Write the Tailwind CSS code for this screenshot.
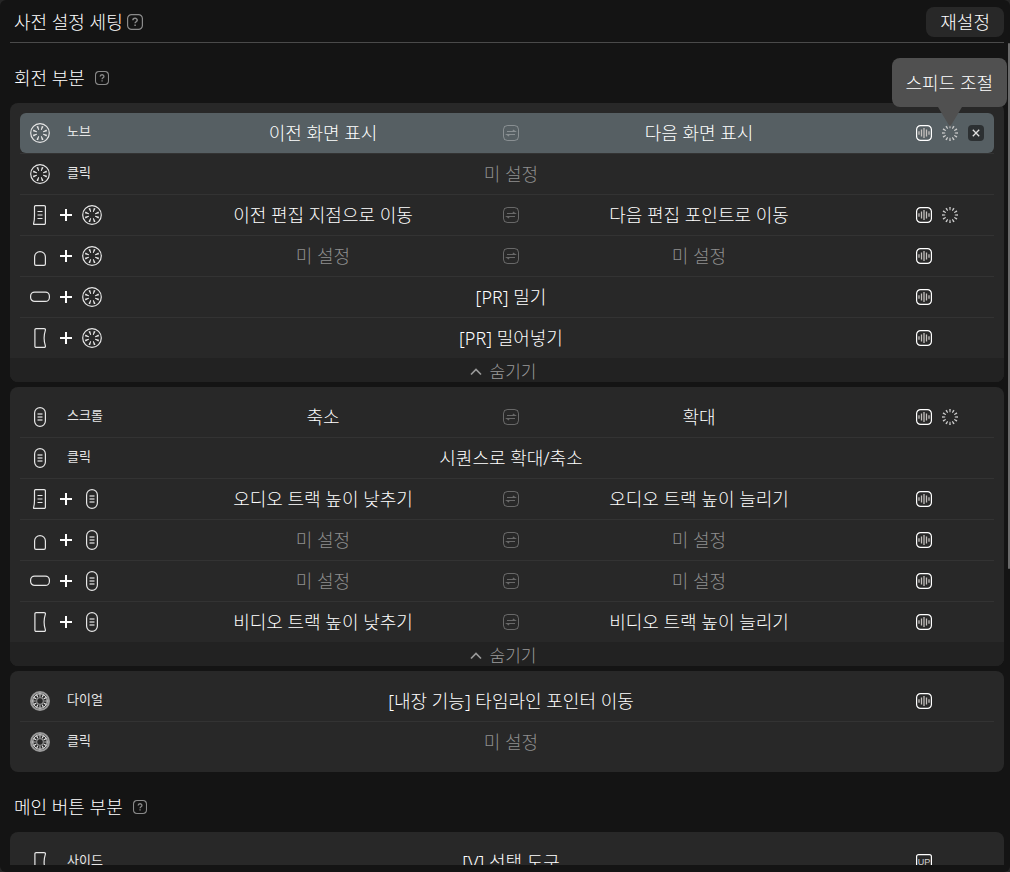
<!DOCTYPE html>
<html lang="ko">
<head>
    <meta charset="UTF-8">
    <meta name="viewport" content="width=device-width, initial-scale=1.0">
    <title>사전 설정 세팅</title>
    <script src="https://cdn.jsdelivr.net/npm/@tailwindcss/browser@4"></script>
</head>
<body class="bg-[#262626] font-['Noto_Sans','Noto_Sans_CJK_KR',sans-serif] text-lg leading-6 font-light text-white">

    <!-- Icon sprite -->
    <svg class="hidden">
        <symbol id="knob" viewBox="0 0 20 20">
            <circle cx="10" cy="10" r="9.3" fill="none" stroke="currentColor" stroke-width="1.2"/>
            <circle cx="10" cy="10" r="5.3" fill="none" stroke="currentColor" stroke-width="4" pathLength="32" stroke-dasharray="1.3 2.7" stroke-dashoffset="-1.35"/>
        </symbol>
        <symbol id="dial" viewBox="0 0 20 20">
            <g fill="none" stroke="currentColor">
                <circle cx="10" cy="10" r="9" stroke-width="2" stroke-opacity=".6"/>
                <circle cx="10" cy="10" r="7.3" stroke-width="1"/>
                <circle cx="10" cy="10" r="5.4" stroke-width="2.8" pathLength="36" stroke-dasharray="1.1 1.9" stroke-dashoffset="0.55"/>
                <circle cx="10" cy="10" r="3.4" stroke-width=".9" stroke-opacity=".7"/>
            </g>
        </symbol>
        <symbol id="scroll" viewBox="0 0 20 20">
            <rect x="4.6" y=".6" width="10.8" height="18.8" rx="5.4" fill="none" stroke="currentColor" stroke-width="1.2"/>
            <path d="M7.5 7h5M7.5 10h5M7.5 13h5" stroke="currentColor" stroke-width="1.6" stroke-opacity=".8"/>
        </symbol>
        <symbol id="tall" viewBox="0 0 20 20">
            <g fill="none" stroke="currentColor" stroke-width="1.2">
                <path d="M5.6.6h8.6a1.2 1.2 0 0 1 1.2 1.2v16.4a1.2 1.2 0 0 1-1.2 1.2H4.1c-.5 0-.7-.4-.5-.8.8-2.4.9-5 .9-7.6V1.8A1.2 1.2 0 0 1 5.6.6z"/>
                <path d="M7.5 6.5h5M7.5 10h5M7.5 13.5h5"/>
            </g>
        </symbol>
        <symbol id="top" viewBox="0 0 20 20">
            <path d="M4.6 18V11a5.4 5.4 0 0 1 10.8 0v7a1.4 1.4 0 0 1-1.4 1.4H6A1.4 1.4 0 0 1 4.6 18z" fill="none" stroke="currentColor" stroke-width="1.2"/>
        </symbol>
        <symbol id="short" viewBox="0 0 20 20">
            <rect x=".6" y="5.1" width="18.8" height="9.3" rx="4" fill="none" stroke="currentColor" stroke-width="1.2"/>
        </symbol>
        <symbol id="side" viewBox="0 0 20 20">
            <path d="M6.1.6h8c.9 0 1.5.6 1.3 1.5-1.7 5.2-1.7 10.6 0 15.8.2.9-.4 1.5-1.3 1.5h-8a1.2 1.2 0 0 1-1.2-1.2V1.8A1.2 1.2 0 0 1 6.1.6z" fill="none" stroke="currentColor" stroke-width="1.2"/>
        </symbol>
        <symbol id="plus" viewBox="0 0 12 12">
            <path d="M6 0v12M0 6h12" stroke="#fff" stroke-width="2"/>
        </symbol>
        <symbol id="swap" viewBox="0 0 16 16">
            <rect x=".5" y=".5" width="15" height="15" rx="4" fill="none" stroke="currentColor"/>
            <path d="M4 6.5h8L9.8 5M12 9.5H4L6.2 11" fill="none" stroke="currentColor" stroke-width="1.2"/>
        </symbol>
        <symbol id="haptic" viewBox="0 0 16 16">
            <rect x=".6" y=".6" width="14.8" height="14.8" rx="4" fill="none" stroke="#fff" stroke-width="1.2"/>
            <path d="M3 6.3v3.4M5.5 4.500v7M8 3v10M10.500 4.500v7M13 6.300v3.400" stroke="#c4c0bd" stroke-width="1.300"/>
        </symbol>
        <symbol id="speed" viewBox="0 0 16 16">
            <circle cx="8" cy="8" r="6.400" fill="none" stroke="#c8c8c8" stroke-width="3.200" pathLength="36" stroke-dasharray="1.200 1.800" stroke-dashoffset=".6"/>
        </symbol>
        <symbol id="close" viewBox="0 0 16 16">
            <rect width="16" height="16" rx="4" fill="#2c3032"/>
            <path d="M4.800 4.800l6.400 6.400M11.200 4.800l-6.400 6.400" stroke="#e0e0e0" stroke-width="1.300"/>
        </symbol>
        <symbol id="up" viewBox="0 0 16 16">
            <rect x=".6" y=".6" width="14.800" height="14.800" rx="2" fill="none" stroke="#fff" stroke-width="1.200"/>
            <text x="8" y="11" text-anchor="middle" font-family="Liberation Sans" font-size="9" font-weight="400" fill="#d0d0d0">UP</text>
        </symbol>
        <symbol id="help" viewBox="0 0 16 16">
            <rect x=".6" y=".6" width="14.800" height="14.800" rx="4" fill="none" stroke="currentColor" stroke-width="1.200"/>
            <path d="M5.900 6.300c0-2.700 4.300-2.700 4.300-.1 0 1.500-2.100 1.600-2.100 3.100M8.100 10.600v1.500" fill="none" stroke="currentColor" stroke-width="1.500"/>
        </symbol>
    </svg>

    <div class="flex h-screen flex-col overflow-hidden rounded-md bg-[#141414] pb-[7px]">
        <header class="mr-1.5 ml-2.5 flex h-[43px] shrink-0 items-center justify-between border-b border-[#4a4a4a] pt-0.5 pl-1">
            <div class="flex items-center gap-1">
                <h1>사전 설정 세팅</h1>
                <button aria-label="도움말" class="text-[#8a8a8a]"><svg class="size-4"><use href="#help"/></svg></button>
            </div>
            <button class="h-[30px] rounded-lg bg-[#282828] px-3.5">재설정</button>
        </header>

        <div class="flex min-h-0 flex-1">
            <main class="min-w-0 flex-1 overflow-hidden pr-1 pl-2.5">
                <div class="flex h-[60px] items-center gap-2.5 pt-2.5 pl-1">
                    <h2>회전 부분</h2>
                    <button aria-label="도움말" class="text-[#8a8a8a]"><svg class="size-3.5"><use href="#help"/></svg></button>
                </div>
                <section class="rounded-lg bg-[#282828] pt-2.5">
                    <ul id="knob-list" class="divide-y divide-[#333] px-2.5"></ul>
                    <button class="flex h-6 w-full items-center justify-center gap-2 rounded-b-lg bg-[#222] pt-1 pr-2 text-[17px] text-[#9a9a9a]">
                        <svg class="h-2 w-3" viewBox="0 0 12 8" fill="none" stroke="currentColor" stroke-width="1.7"><path d="M1 6.5l5-5 5 5"/></svg>
                        숨기기
                    </button>
                </section>
                <section class="mt-[5px] rounded-lg bg-[#282828] pt-2.5">
                    <ul id="scroll-list" class="divide-y divide-[#333] px-2.5"></ul>
                    <button class="flex h-6 w-full items-center justify-center gap-2 rounded-b-lg bg-[#222] pt-1 pr-2 text-[17px] text-[#9a9a9a]">
                        <svg class="h-2 w-3" viewBox="0 0 12 8" fill="none" stroke="currentColor" stroke-width="1.7"><path d="M1 6.5l5-5 5 5"/></svg>
                        숨기기
                    </button>
                </section>
                <section class="mt-[5px] rounded-lg bg-[#282828] py-2.5">
                    <ul id="dial-list" class="divide-y divide-[#333] px-2.5"></ul>
                </section>

                <div class="flex h-[60px] items-center gap-2.5 pt-2.5 pl-1">
                    <h2>메인 버튼 부분</h2>
                    <button aria-label="도움말" class="text-[#8a8a8a]"><svg class="size-3.5"><use href="#help"/></svg></button>
                </div>
                <section class="rounded-lg bg-[#282828] pt-2.5">
                    <ul id="main-list" class="divide-y divide-[#333] px-2.5"></ul>
                </section>
            </main>
            <!-- Scrollbar -->
            <div class="w-0.5 shrink-0"><div class="h-[64%] rounded-full bg-[#6a6a6a]"></div></div>
        </div>
    </div>

    <script>
        const UNSET = "미 설정";

        // keys: icons on the left, actions: one (merged) or two (left/right turn)
        const lists = {
            "knob-list": [
                { keys: ["knob"], label: "노브", actions: ["이전 화면 표시", "다음 화면 표시"], tools: ["haptic", "speed", "close"], active: true },
                { keys: ["knob"], label: "클릭", actions: [UNSET], tools: [] },
                { keys: ["tall", "knob"], actions: ["이전 편집 지점으로 이동", "다음 편집 포인트로 이동"], tools: ["haptic", "speed"] },
                { keys: ["top", "knob"], actions: [UNSET, UNSET], tools: ["haptic"] },
                { keys: ["short", "knob"], actions: ["[PR] 밀기"], tools: ["haptic"] },
                { keys: ["side", "knob"], actions: ["[PR] 밀어넣기"], tools: ["haptic"] },
            ],
            "scroll-list": [
                { keys: ["scroll"], label: "스크롤", actions: ["축소", "확대"], tools: ["haptic", "speed"] },
                { keys: ["scroll"], label: "클릭", actions: ["시퀀스로 확대/축소"], tools: [] },
                { keys: ["tall", "scroll"], actions: ["오디오 트랙 높이 낮추기", "오디오 트랙 높이 늘리기"], tools: ["haptic"] },
                { keys: ["top", "scroll"], actions: [UNSET, UNSET], tools: ["haptic"] },
                { keys: ["short", "scroll"], actions: [UNSET, UNSET], tools: ["haptic"] },
                { keys: ["side", "scroll"], actions: ["비디오 트랙 높이 낮추기", "비디오 트랙 높이 늘리기"], tools: ["haptic"] },
            ],
            "dial-list": [
                { keys: ["dial"], label: "다이얼", actions: ["[내장 기능] 타임라인 포인터 이동"], tools: ["haptic"] },
                { keys: ["dial"], label: "클릭", actions: [UNSET], tools: [] },
            ],
            "main-list": [
                { keys: ["side"], label: "사이드", actions: ["[V] 선택 도구"], tools: ["up"] },
            ],
        };

        const toolNames = { haptic: "진동", speed: "스피드 조절", close: "삭제", up: "UP" };

        const tooltip = `
            <span role="tooltip" class="absolute -right-[49px] bottom-[34px] flex h-[49px] items-center rounded-lg bg-[#505050] px-3.5 whitespace-nowrap">스피드 조절</span>
            <svg class="absolute bottom-3.5 -left-1 h-5 w-6" viewBox="0 0 24 20"><path d="M0 0h24L12 20z" fill="#505050"/></svg>`;

        function icon(name, size) {
            return `<svg class="${size}"><use href="#${name}"/></svg>`;
        }

        function action(text) {
            return `<button class="${text === UNSET ? "text-[#8f8f8f]" : "text-white"}">${text}</button>`;
        }

        function row(item) {
            const keys = item.keys.map(k => icon(k, "size-5")).join(icon("plus", "size-3"));
            const label = item.label ? `<span class="ml-[7px] pb-1 text-[13px] font-normal">${item.label}</span>` : "";
            const actions = item.actions.length === 2
                ? `<div class="grid flex-1 grid-cols-[1fr_16px_1fr] items-center">
                       ${action(item.actions[0])}
                       <button aria-label="바꾸기" class="text-white/30">${icon("swap", "size-4")}</button>
                       ${action(item.actions[1])}
                   </div>`
                : `<div class="grid flex-1">${action(item.actions[0])}</div>`;
            const tools = item.tools.map(t =>
                `<button aria-label="${toolNames[t]}" class="relative">${icon(t, "size-4")}${item.active && t === "speed" ? tooltip : ""}</button>`
            ).join("");

            return `
                <li>
                    <div class="flex h-10 items-center ${item.active ? "rounded-md bg-[#565f63]" : ""}">
                        <div class="flex w-[123px] items-center gap-2.5 pl-2.5 text-[#e6e6e6]">${keys}${label}</div>
                        ${actions}
                        <div class="flex w-[115px] gap-2.5 pl-[37px]">${tools}</div>
                    </div>
                </li>`;
        }

        for (const [id, items] of Object.entries(lists)) {
            document.getElementById(id).innerHTML = items.map(row).join("");
        }
    </script>
</body>
</html>
